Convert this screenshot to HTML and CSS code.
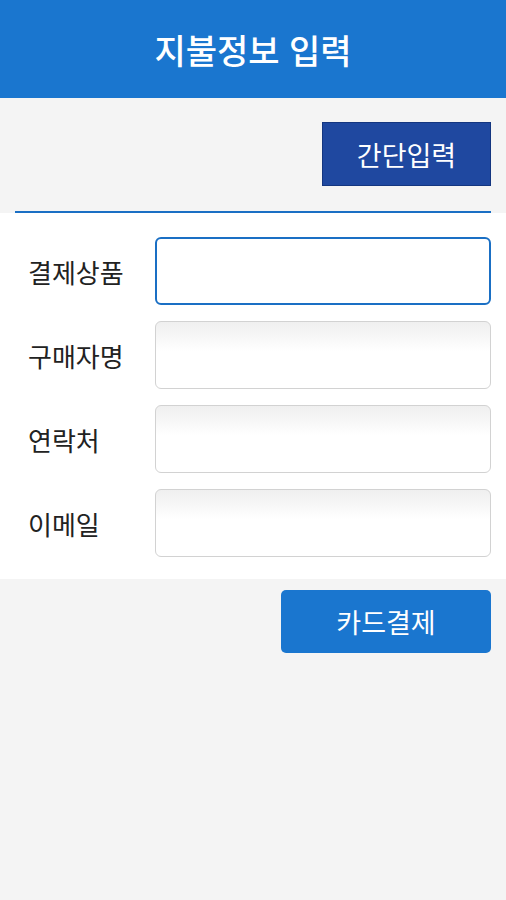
FILE: index.html
```html
<!DOCTYPE html>
<html lang="ko">
<head>
    <meta charset="UTF-8">
    <meta name="viewport" content="width=device-width, initial-scale=1.0">
    <title>지불정보 입력</title>
    <link rel="stylesheet" href="styles.css">
</head>
<body>
    <header class="topbar">
        <h1>지불정보 입력</h1>
    </header>

    <div class="toolbar">
        <button class="btn btn-quick">간단입력</button>
    </div>
    <div class="divider"></div>

    <form class="pay-form">
        <div class="row">
            <label for="product">결제상품</label>
            <input type="text" id="product" class="focused">
        </div>
        <div class="row">
            <label for="buyer">구매자명</label>
            <input type="text" id="buyer">
        </div>
        <div class="row">
            <label for="phone">연락처</label>
            <input type="text" id="phone">
        </div>
        <div class="row">
            <label for="email">이메일</label>
            <input type="text" id="email">
        </div>
    </form>

    <div class="actions">
        <button class="btn btn-pay">카드결제</button>
    </div>
</body>
</html>
```

FILE: styles.css
```css
body {
    margin: 0;
    font-family: "Noto Sans CJK KR", "Noto Sans", sans-serif;
    background-color: #f4f4f4;
    color: #222;
}

.topbar {
    height: 98px;
    background-color: #1a76cf;
    display: flex;
    align-items: center;
    justify-content: center;
}

.topbar h1 {
    margin: 0;
    color: white;
    font-size: 34px;
    font-weight: 500;
}

.toolbar {
    display: flex;
    justify-content: flex-end;
    padding: 24px 15px 25px;
}

.btn {
    font-family: inherit;
    font-size: 27px;
    color: white;
    cursor: pointer;
}

.btn-quick {
    width: 169px;
    height: 64px;
    background-color: #1f48a0;
    border: 1px solid #143680;
    border-radius: 0;
}

.divider {
    height: 2px;
    margin: 0 15px;
    background-color: #1a6fc4;
}

.pay-form {
    background-color: white;
    padding: 24px 15px 22px 28px;
    display: flex;
    flex-direction: column;
    gap: 16px;
}

.row {
    display: flex;
    align-items: center;
}

.row label {
    width: 127px;
    font-size: 26px;
    color: #222;
}

.row input {
    flex: 1;
    height: 68px;
    box-sizing: border-box;
    border: 1px solid #d2d2d2;
    border-radius: 6px;
    background: linear-gradient(#efefef, #ffffff 45%);
    outline: none;
}

.row input.focused {
    border: 2px solid #1a6fc4;
    background: white;
}

.actions {
    display: flex;
    justify-content: flex-end;
    padding: 11px 15px;
}

.btn-pay {
    width: 210px;
    height: 63px;
    background-color: #1a76cf;
    border: none;
    border-radius: 5px;
}
```
